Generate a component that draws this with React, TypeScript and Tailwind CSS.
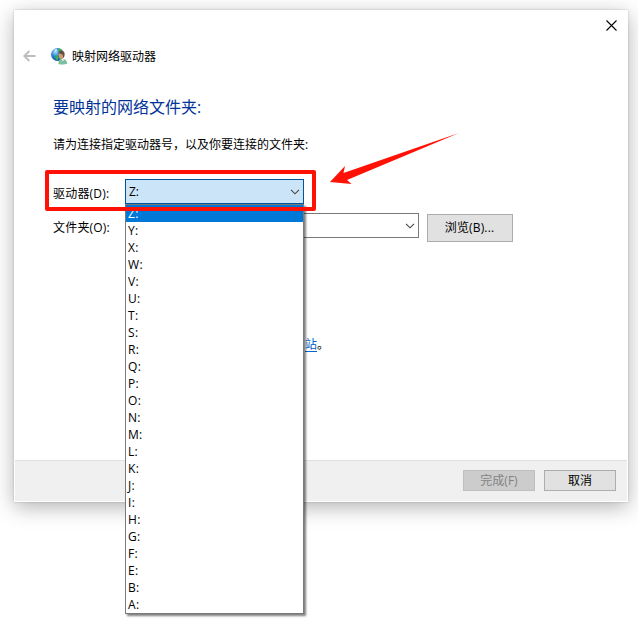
import React from "react";

const DRIVES = "ZYXWVUTSRQPONMLKJIHGFEBA".split("");

function Chevron() {
  return (
    <svg width="10" height="6" viewBox="0 0 10 6" fill="none" stroke="#444444" strokeWidth="1.1">
      <path d="M1 .8 5 4.8 9 .8" />
    </svg>
  );
}

function NetworkIcon() {
  return (
    <svg width="17" height="17" viewBox="0 0 17 17">
      <defs>
        <radialGradient id="globe" cx="35%" cy="30%" r="75%">
          <stop offset="0" stopColor="#a9e0fb" />
          <stop offset=".45" stopColor="#2c86d8" />
          <stop offset="1" stopColor="#0d3f9c" />
        </radialGradient>
      </defs>
      <circle cx="6.500" cy="6.500" r="6.500" fill="url(#globe)" />
      <path d="M3.500 1.500 6 .8 6 2.500 4 4Z" fill="#c5ecf5" />
      <path d="M3.800 7 6.500 7.400 7.600 10 6.500 12.800 4.600 10.800Z" fill="#35b548" />
      <path d="M7 .6 10 1 11.500 2.500 8.500 3.600 7 2.800Z" fill="#3fae55" />
      <path d="M7.500 16c-.3-3.400 1-5.200 3.600-5.200 2.800 0 5 1.800 5.200 4.600-1.800 1.300-7 1.500-8.800.6Z" fill="#7fbf9d" />
      <path d="M10 10.800 11.800 13.600 13.300 11Z" fill="#e2eee6" />
      <ellipse cx="10.200" cy="7.600" rx="2.500" ry="3.500" fill="#d39a6a" />
      <path d="M7.500 5.500C7.500 3 9.500 2.300 11.300 2.700c2.200.5 2.900 2.800 2 5.700l-1 1.500-.7-3.400-2.800-1Z" fill="#65503f" />
    </svg>
  );
}

export default function App() {
  return (
    <div className="relative h-[620px] w-[638px] overflow-hidden bg-white pl-[14px] pt-[10px] font-['Open_Sans','Noto_Sans_CJK_SC',sans-serif] text-[12px] leading-4 text-black">
      <div className="flex h-[492px] w-[614px] flex-col bg-white shadow-[0_5px_20px_rgba(0,0,0,0.3),0_0_2px_rgba(0,0,0,0.2)]">
        <div className="flex h-[30px] justify-end pr-[11px] pt-[10px]">
          <svg width="11" height="11" viewBox="0 0 11 11" stroke="#000" strokeWidth="1.1">
            <path d="M.5.5l10 10M10.500.5l-10 10" />
          </svg>
        </div>
        <div className="flex h-[34px] items-center pl-[9px]">
          <svg className="-mt-[3px]" width="13" height="12" viewBox="0 0 13 12" fill="none" stroke="#bdbdbd" strokeWidth="1.9">
            <path d="M12.500 6H1.500M6.300 1 1.300 6l5 5" />
          </svg>
          <div className="-mt-px ml-[15px]">
            <NetworkIcon />
          </div>
          <span className="ml-[4px]">映射网络驱动器</span>
        </div>
        <main className="flex flex-1 flex-col pl-[39px]">
          <h1 className="mt-[21px] text-[16px] leading-6 text-[#003399]">要映射的网络文件夹:</h1>
          <p className="mt-[18px]">请为连接指定驱动器号，以及你要连接的文件夹:</p>
          <div className="mt-[26px] flex h-[25px] items-center">
            <label className="w-[72px] pt-[4px] tracking-[0.2px]">驱动器(D):</label>
            <div className="flex h-[25px] w-[179px] items-center justify-between border border-[#00559b] bg-[#cce4f7] pl-[3px] pr-[3px]">
              <span>Z:</span>
              <Chevron />
            </div>
          </div>
          <div className="mt-[9px] flex h-[29px] items-start">
            <label className="w-[72px] pt-[7px] tracking-[0.2px]">文件夹(O):</label>
            <div className="flex h-[25px] w-[294px] items-center justify-end border border-[#7a7a7a] bg-white pr-[3px]">
              <Chevron />
            </div>
            <button className="ml-2 mt-px h-7 w-[86px] border border-[#adadad] bg-[#e1e1e1] pr-px tracking-[0.15px]">浏览(B)...</button>
          </div>
          <div className="mt-[95px] flex pl-[252px]">
            <a className="h-[15px] border-b border-[#0066cc] text-[#0066cc]">站</a>
            <span>。</span>
          </div>
        </main>
        <footer className="mx-px mb-px flex h-[41px] justify-end border-t border-[#dfdfdf] bg-[#f0f0f0] pr-[11px] pt-[9px]">
          <button className="h-[21px] w-[72px] border border-[#bfbfbf] bg-[#cccccc] leading-[19px] text-[#838383]">完成(F)</button>
          <button className="ml-[9px] h-[21px] w-[72px] border border-[#adadad] bg-[#e1e1e1] leading-[19px]">取消</button>
        </footer>
      </div>

      <ul className="absolute left-[125px] top-[204px] w-[179px] border border-[#7a7a7a] bg-white tracking-[0.3px] shadow-[2px_2px_2px_rgba(0,0,0,0.5)]">
        {DRIVES.map((letter) => (
          <li
            key={letter}
            className={letter === "Z" ? "h-[17px] bg-[#0078d7] pl-[2px] leading-[17px] text-white" : "h-[17px] pl-[2px] leading-[17px]"}
          >
            {letter}:
          </li>
        ))}
      </ul>

      <div className="absolute left-[45px] top-[170px] h-[41px] w-[271px] rounded-[2px] border-4 border-[#ff1205]" />
      <svg className="absolute left-[328px] top-[130px]" width="134" height="58" viewBox="0 0 134 58">
        <path d="M2 52 17 36 15.500 43 131 3 19 50 23.500 54Z" fill="#ff1205" />
      </svg>
    </div>
  );
}
